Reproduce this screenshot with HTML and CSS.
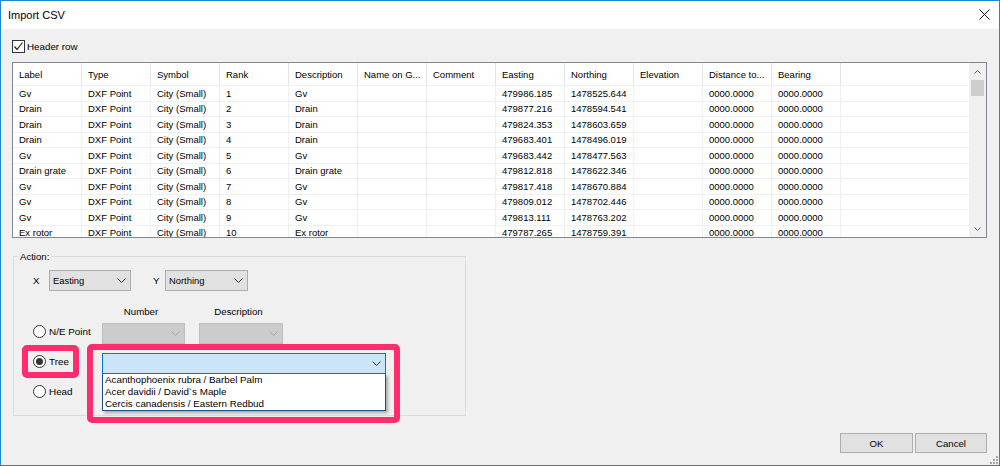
FILE: index.html
```html
<!DOCTYPE html>
<html>
<head>
<meta charset="utf-8">
<title>Import CSV</title>
<link rel="stylesheet" href="styles.css">
</head>
<body>
<div class="window">
  <div class="titlebar">
    <span class="title">Import CSV</span>
    <svg class="close" width="11" height="11" viewBox="0 0 11 11"><path d="M0.5 0.5L10.5 10.5M10.5 0.5L0.5 10.5" stroke="#111" stroke-width="1" fill="none"/></svg>
  </div>
  <div class="client">
    <label class="check-row">
      <span class="checkbox"><svg width="11" height="11" viewBox="0 0 11 11"><path d="M1.5 5.5L4 8.5L9.5 1.5" stroke="#222" stroke-width="1.2" fill="none"/></svg></span>
      <span>Header row</span>
    </label>

    <div class="list">
      <div class="list-main">
        <div class="list-head">
          <div class="hcell">Label</div><div class="hcell">Type</div><div class="hcell">Symbol</div><div class="hcell">Rank</div><div class="hcell">Description</div><div class="hcell">Name on G...</div><div class="hcell">Comment</div><div class="hcell">Easting</div><div class="hcell">Northing</div><div class="hcell">Elevation</div><div class="hcell">Distance to...</div><div class="hcell">Bearing</div><div class="hfill"></div>
        </div>
        <div class="list-body">
          <div class="row"><div class="cell">Gv</div><div class="cell">DXF Point</div><div class="cell">City (Small)</div><div class="cell">1</div><div class="cell">Gv</div><div class="cell"></div><div class="cell"></div><div class="cell">479986.185</div><div class="cell">1478525.644</div><div class="cell"></div><div class="cell">0000.0000</div><div class="cell">0000.0000</div><div class="fill"></div></div>
          <div class="row"><div class="cell">Drain</div><div class="cell">DXF Point</div><div class="cell">City (Small)</div><div class="cell">2</div><div class="cell">Drain</div><div class="cell"></div><div class="cell"></div><div class="cell">479877.216</div><div class="cell">1478594.541</div><div class="cell"></div><div class="cell">0000.0000</div><div class="cell">0000.0000</div><div class="fill"></div></div>
          <div class="row"><div class="cell">Drain</div><div class="cell">DXF Point</div><div class="cell">City (Small)</div><div class="cell">3</div><div class="cell">Drain</div><div class="cell"></div><div class="cell"></div><div class="cell">479824.353</div><div class="cell">1478603.659</div><div class="cell"></div><div class="cell">0000.0000</div><div class="cell">0000.0000</div><div class="fill"></div></div>
          <div class="row"><div class="cell">Drain</div><div class="cell">DXF Point</div><div class="cell">City (Small)</div><div class="cell">4</div><div class="cell">Drain</div><div class="cell"></div><div class="cell"></div><div class="cell">479683.401</div><div class="cell">1478496.019</div><div class="cell"></div><div class="cell">0000.0000</div><div class="cell">0000.0000</div><div class="fill"></div></div>
          <div class="row"><div class="cell">Gv</div><div class="cell">DXF Point</div><div class="cell">City (Small)</div><div class="cell">5</div><div class="cell">Gv</div><div class="cell"></div><div class="cell"></div><div class="cell">479683.442</div><div class="cell">1478477.563</div><div class="cell"></div><div class="cell">0000.0000</div><div class="cell">0000.0000</div><div class="fill"></div></div>
          <div class="row"><div class="cell">Drain grate</div><div class="cell">DXF Point</div><div class="cell">City (Small)</div><div class="cell">6</div><div class="cell">Drain grate</div><div class="cell"></div><div class="cell"></div><div class="cell">479812.818</div><div class="cell">1478622.346</div><div class="cell"></div><div class="cell">0000.0000</div><div class="cell">0000.0000</div><div class="fill"></div></div>
          <div class="row"><div class="cell">Gv</div><div class="cell">DXF Point</div><div class="cell">City (Small)</div><div class="cell">7</div><div class="cell">Gv</div><div class="cell"></div><div class="cell"></div><div class="cell">479817.418</div><div class="cell">1478670.884</div><div class="cell"></div><div class="cell">0000.0000</div><div class="cell">0000.0000</div><div class="fill"></div></div>
          <div class="row"><div class="cell">Gv</div><div class="cell">DXF Point</div><div class="cell">City (Small)</div><div class="cell">8</div><div class="cell">Gv</div><div class="cell"></div><div class="cell"></div><div class="cell">479809.012</div><div class="cell">1478702.446</div><div class="cell"></div><div class="cell">0000.0000</div><div class="cell">0000.0000</div><div class="fill"></div></div>
          <div class="row"><div class="cell">Gv</div><div class="cell">DXF Point</div><div class="cell">City (Small)</div><div class="cell">9</div><div class="cell">Gv</div><div class="cell"></div><div class="cell"></div><div class="cell">479813.111</div><div class="cell">1478763.202</div><div class="cell"></div><div class="cell">0000.0000</div><div class="cell">0000.0000</div><div class="fill"></div></div>
          <div class="row"><div class="cell">Ex rotor</div><div class="cell">DXF Point</div><div class="cell">City (Small)</div><div class="cell">10</div><div class="cell">Ex rotor</div><div class="cell"></div><div class="cell"></div><div class="cell">479787.265</div><div class="cell">1478759.391</div><div class="cell"></div><div class="cell">0000.0000</div><div class="cell">0000.0000</div><div class="fill"></div></div>
        </div>
      </div>
      <div class="vscroll">
        <div class="sbtn"><svg width="7" height="4" viewBox="0 0 7 4"><path d="M0.5 3.5L3.5 0.5L6.5 3.5" stroke="#606060" fill="none"/></svg></div>
        <div class="thumb"></div>
        <div class="track"></div>
        <div class="sbtn"><svg width="7" height="4" viewBox="0 0 7 4"><path d="M0.5 0.5L3.5 3.5L6.5 0.5" stroke="#606060" fill="none"/></svg></div>
      </div>
    </div>

    <div class="lower">
      <fieldset class="action">
        <legend>Action:</legend>
        <div class="action-body">
          <div class="xy-row">
            <span class="axis x">X</span>
            <div class="combo w82"><span>Easting</span><svg width="9" height="5" viewBox="0 0 9 5"><path d="M0.5 0.5L4.5 4.5L8.5 0.5" stroke="#333" fill="none"/></svg></div>
            <span class="axis y">Y</span>
            <div class="combo w83"><span>Northing</span><svg width="9" height="5" viewBox="0 0 9 5"><path d="M0.5 0.5L4.5 4.5L8.5 0.5" stroke="#333" fill="none"/></svg></div>
          </div>
          <div class="col-labels">
            <span class="radio-spacer"></span>
            <span class="col-label w83">Number</span>
            <span class="col-label w84">Description</span>
          </div>
          <div class="opt-row">
            <label class="radio-label"><span class="radio"></span><span>N/E Point</span></label>
            <div class="combo disabled w83"><span></span><svg width="9" height="5" viewBox="0 0 9 5"><path d="M0.5 0.5L4.5 4.5L8.5 0.5" stroke="#a6a6a6" fill="none"/></svg></div>
            <div class="combo disabled w84 gap14"><span></span><svg width="9" height="5" viewBox="0 0 9 5"><path d="M0.5 0.5L4.5 4.5L8.5 0.5" stroke="#a6a6a6" fill="none"/></svg></div>
          </div>
          <div class="opt-row">
            <label class="radio-label marked"><span class="radio checked"></span><span>Tree</span></label>
            <div class="tree-combo-wrap">
              <div class="combo focused w284"><span></span><svg width="9" height="5" viewBox="0 0 9 5"><path d="M0.5 0.5L4.5 4.5L8.5 0.5" stroke="#333" fill="none"/></svg></div>
              <ul class="droplist">
                <li>Acanthophoenix rubra / Barbel Palm</li>
                <li>Acer davidii / David`s Maple</li>
                <li>Cercis canadensis / Eastern Redbud</li>
              </ul>
            </div>
          </div>
          <div class="opt-row">
            <label class="radio-label"><span class="radio"></span><span>Head</span></label>
          </div>
        </div>
      </fieldset>
    </div>

    <div class="footer">
      <button class="btn ok">OK</button>
      <button class="btn cancel">Cancel</button>
    </div>
  </div>
  <svg class="grip" width="9" height="9" viewBox="0 0 9 9"><g fill="#a8a8a8"><rect x="7" y="1" width="2" height="2"/><rect x="4" y="4" width="2" height="2"/><rect x="7" y="4" width="2" height="2"/><rect x="1" y="7" width="2" height="2"/><rect x="4" y="7" width="2" height="2"/><rect x="7" y="7" width="2" height="2"/></g></svg>
</div>
</body>
</html>
```

FILE: styles.css
```css
*, *::before, *::after { box-sizing: border-box; }
html, body { margin: 0; padding: 0; }
body {
  background: #fff;
  font-family: "Liberation Sans", Arial, sans-serif;
  font-size: 9.5px;
  color: #000;
}
.window {
  width: 1000px;
  height: 466px;
  border: 1px solid #1c86d6;
  display: flex;
  flex-direction: column;
  position: relative;
  background: #f0f0f0;
}
.titlebar {
  height: 28px;
  flex: none;
  background: #fff;
  display: flex;
  align-items: center;
  justify-content: space-between;
  padding: 0 9px 0 7px;
}
.title { font-size: 11px; }
.close { margin-top: -2px; }

.client {
  flex: 1;
  display: flex;
  flex-direction: column;
  padding: 11px 12px 12px 11px;
}
.check-row {
  display: flex;
  align-items: center;
  height: 13px;
  gap: 2px;
  font-size: 9.8px;
}
.checkbox {
  width: 13px;
  height: 13px;
  border: 1px solid #333;
  background: #fff;
  display: flex;
  align-items: center;
  justify-content: center;
}

/* list view */
.list {
  margin-top: 9px;
  height: 176px;
  flex: none;
  border: 1px solid #828790;
  background: #fff;
  display: flex;
}
.list-main { flex: 1; overflow: hidden; }
.list-head, .row {
  display: grid;
  grid-template-columns: repeat(12, 69px) 1fr;
}
.list-head {
  height: 23px;
  border-bottom: 1px solid #f0f0f0;
}
.hcell {
  border-right: 1px solid #e5e5e5;
  padding: 1px 0 0 6px;
  line-height: 22px;
  white-space: nowrap;
  overflow: hidden;
}
.row {
  height: 15.5px;
  border-bottom: 1px solid #f0f0f0;
}
.cell {
  border-right: 1px solid #f0f0f0;
  padding: 0.5px 0 0 6px;
  line-height: 14px;
  white-space: nowrap;
  overflow: hidden;
}
.vscroll {
  width: 17px;
  flex: none;
  background: #f0f0f0;
  display: flex;
  flex-direction: column;
}
.sbtn {
  height: 17px;
  display: flex;
  align-items: center;
  justify-content: center;
}
.thumb {
  height: 16px;
  margin: 0 2px;
  background: #cdcdcd;
}
.track { flex: 1; }

/* action group */
.lower { display: flex; margin-top: 12px; }
.action {
  margin: 0 0 0 1px;
  padding: 0 0 11px 4px;
  border: 1px solid #dcdcdc;
  width: 453px;
  min-width: 0;
}
.action legend {
  padding: 0 2px;
  font-size: 9.6px;
  line-height: 13px;
}
.action-body { padding-left: 15px; }
.xy-row {
  display: flex;
  align-items: center;
  height: 21px;
  margin-top: 7px;
  font-size: 9.8px;
}
.axis.x { width: 16px; }
.axis.y { width: 12px; margin-left: 22px; }
.combo {
  height: 21px;
  border: 1px solid #adadad;
  background: #e1e1e1;
  display: flex;
  align-items: center;
  justify-content: space-between;
  padding: 0 4px 0 3px;
  font-size: 9.4px;
}
.combo.disabled { background: #cccccc; border-color: #bfbfbf; }
.combo.focused { background: #cce4f7; border-color: #0078d7; }
.w82 { width: 82px; }
.w83 { width: 83px; }
.w84 { width: 84px; }
.w284 { width: 284px; }
.gap14 { margin-left: 14px; }

.col-labels {
  display: flex;
  height: 14px;
  margin-top: 14px;
  font-size: 9.7px;
  line-height: 14px;
}
.radio-spacer { width: 69px; }
.col-label { text-align: center; padding-right: 5px; }
.col-label.w84 { margin-left: 14px; }

.opt-row {
  display: flex;
  align-items: center;
  height: 21px;
  margin-top: 9px;
  font-size: 9.9px;
}
.col-labels + .opt-row { margin-top: 4px; }
.radio-label {
  width: 69px;
  height: 14px;
  display: flex;
  align-items: center;
  gap: 3px;
  margin-bottom: 4px;
  position: relative;
}
.radio {
  width: 13px;
  height: 13px;
  border: 1px solid #333;
  border-radius: 50%;
  background: #fff;
  display: flex;
  align-items: center;
  justify-content: center;
}
.radio.checked::after {
  content: "";
  width: 7px;
  height: 7px;
  border-radius: 50%;
  background: #333;
}
.radio-label.marked::before {
  content: "";
  position: absolute;
  left: -11px;
  top: -10px;
  width: 57px;
  height: 33px;
  border: 6px solid #ff2c6e;
  border-radius: 5px;
}
.tree-combo-wrap { position: relative; }
.tree-combo-wrap::before {
  content: "";
  position: absolute;
  left: -15px;
  top: -9px;
  width: 313px;
  height: 79px;
  border: 6px solid #ff2c6e;
  border-radius: 5px;
}
.droplist {
  position: absolute;
  left: 0;
  top: 100%;
  width: 284px;
  margin: 0;
  padding: 0 0 0 2px;
  list-style: none;
  background: #fff;
  border: 1px solid #1d4f86;
  border-top: none;
  box-shadow: 2px 2px 3px rgba(0, 0, 0, 0.3);
  font-size: 9.8px;
  line-height: 12px;
}
.droplist li { height: 12px; white-space: nowrap; }

.lower + .footer { margin-top: auto; }
.footer {
  display: flex;
  justify-content: flex-end;
  gap: 2px;
}
.btn {
  height: 20px;
  border: 1px solid #adadad;
  background: #e1e1e1;
  font-family: inherit;
  font-size: 9.6px;
  color: #000;
  padding: 0;
}
.btn.ok { width: 73px; }
.btn.cancel { width: 72px; }
.grip { position: absolute; right: 1px; bottom: 1px; }
```
